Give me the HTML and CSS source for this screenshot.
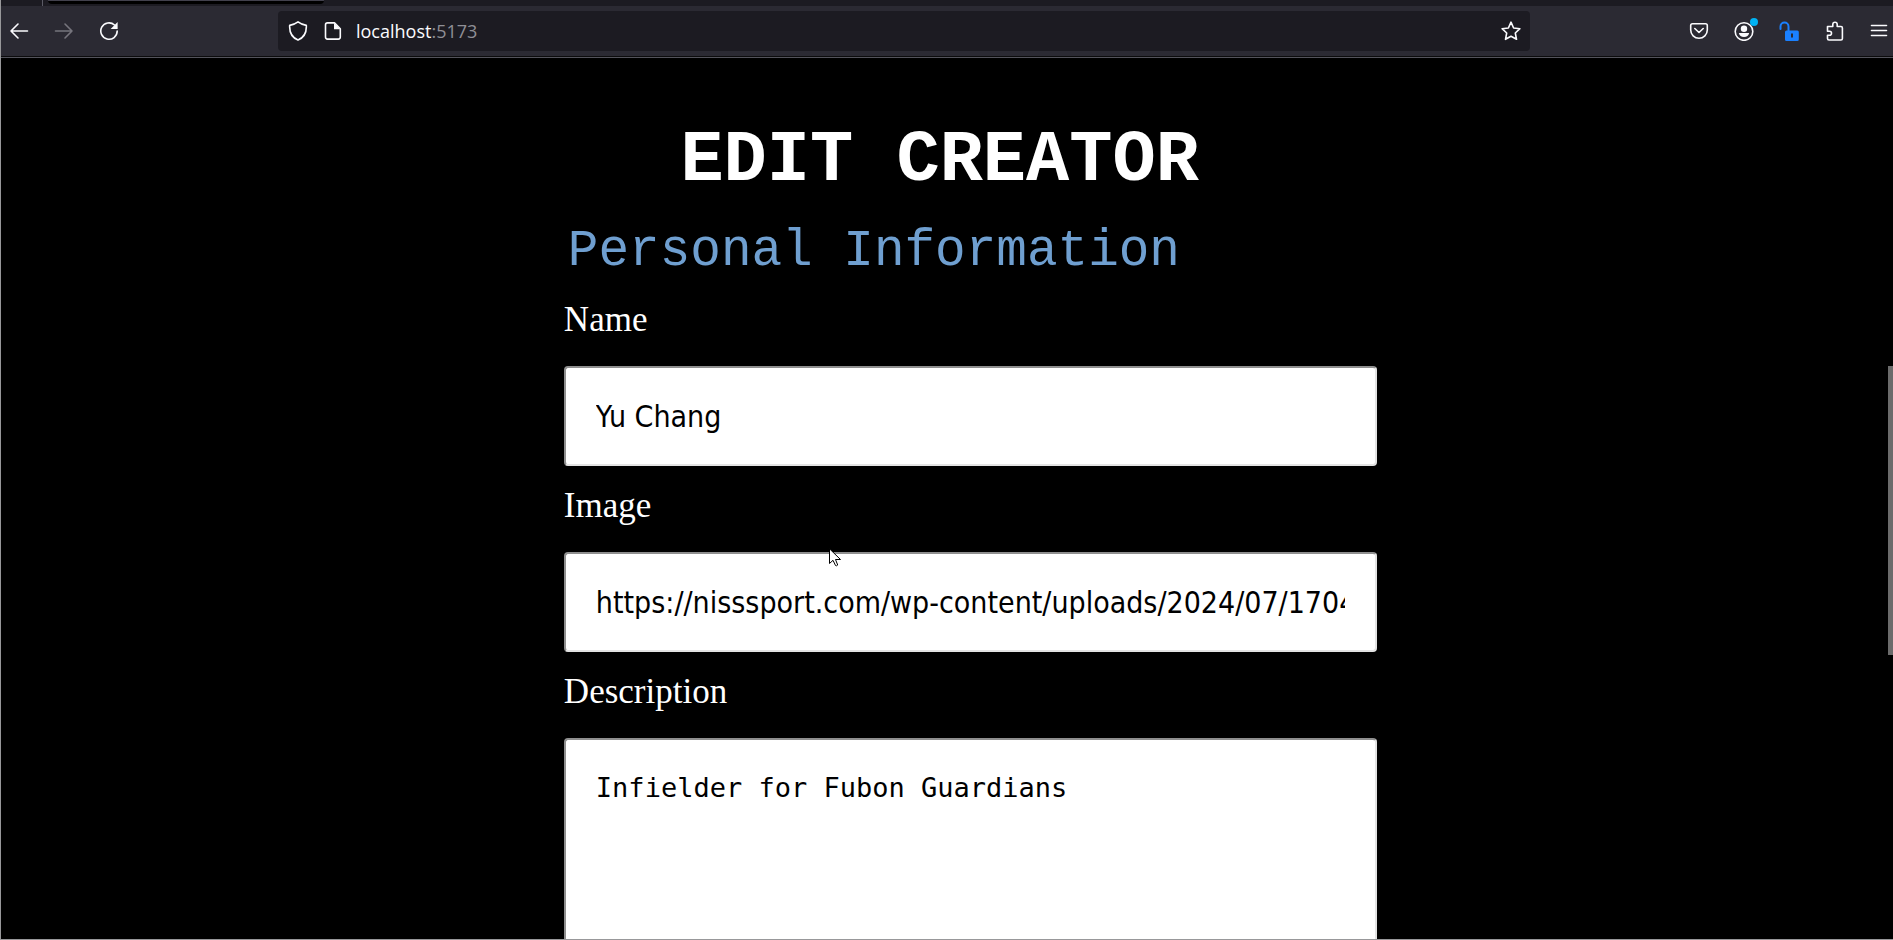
FILE: index.html
```html
<!DOCTYPE html>
<html lang="en">
<head>
<meta charset="utf-8">
<title>Edit Creator</title>
<link rel="stylesheet" href="styles.css">
</head>
<body>
<div class="window">
  <div class="tab-strip"><div class="tab-divider"></div><div class="active-tab"></div></div>
  <header class="toolbar">
    <nav class="nav-buttons">
      <button class="icon-button" aria-label="Back"><svg viewBox="0 0 20 20"><path d="M18.500 10H2M9 3L2 10L9 17"/></svg></button>
      <button class="icon-button dim" aria-label="Forward"><svg viewBox="0 0 20 20"><path d="M1.500 10H18M11 3L18 10L11 17"/></svg></button>
      <button class="icon-button" aria-label="Reload"><svg viewBox="0 0 20 20"><path d="M15.500 4A8.200 8.200 0 1 0 18.200 10"/><path class="solid" d="M18.600 1V8H11.600Z"/></svg></button>
    </nav>
    <div class="url-bar">
      <button class="icon-button" aria-label="Tracking protection"><svg viewBox="0 0 20 20"><path d="M10 .9C12.500 2.800 15.500 3.900 18.300 4.400C18.700 10.800 16 16.500 10 19.100C4 16.500 1.300 10.800 1.700 4.400C4.500 3.900 7.500 2.800 10 .9Z"/></svg></button>
      <button class="icon-button" aria-label="Site information"><svg viewBox="-1 0 20 20"><path d="M4.500 1.900H11.500L17.300 7.700V16.100Q17.300 18.100 15.300 18.100H4.500Q2.500 18.100 2.500 16.100V3.900Q2.500 1.900 4.500 1.900Z"/><path class="solid" d="M11 2V8.200H17.300Z"/></svg></button>
      <div class="address"><span>localhost</span><span class="port">:5173</span></div>
      <button class="icon-button" aria-label="Bookmark"><svg viewBox="0 0 20 20"><path d="M10 1.200L12.600 7L18.900 7.700L14.300 12L15.500 18.300L10 15.200L4.500 18.300L5.700 12L1.100 7.700L7.400 7Z"/></svg></button>
    </div>
    <nav class="tool-buttons">
      <button class="icon-button" aria-label="Pocket"><svg viewBox="0 0 20 20"><path d="M3.500 2.700H16.500Q18.300 2.700 18.300 4.500V9A8.300 8.300 0 0 1 1.700 9V4.500Q1.700 2.700 3.500 2.700ZM5.800 7.500L10 11.500L14.200 7.500"/></svg></button>
      <button class="icon-button" aria-label="Account"><svg viewBox="0 0 20 20"><circle cx="10" cy="10.500" r="8.800"/><circle class="solid" cx="10" cy="7.700" r="3.200"/><path class="solid" d="M4.800 12H15.200Q14.300 16 10 16Q5.700 16 4.800 12Z"/></svg><span class="notice"></span></button>
      <button class="icon-button blue" aria-label="Unlocked"><svg viewBox="0 0 20 20"><path d="M1.500 8V5.500A4 4 0 0 1 9.500 5.500V10"/><path class="solid" fill-rule="evenodd" d="M7.500 9.500H18.300Q19.800 9.500 19.800 11V18.500Q19.800 20 18.300 20H7.500Q6 20 6 18.500V11Q6 9.500 7.500 9.500ZM12 12.500V16.500H14V12.500Z"/></svg></button>
      <button class="icon-button" aria-label="Extensions"><svg viewBox="-1 0 20 20"><path d="M2.500 5.500H7.800V3.500A2.200 2.200 0 0 1 12.200 3.500V5.500H16Q17.400 5.500 17.400 7V17.500Q17.400 19 16 19H4Q2.500 19 2.500 17.500V14.200H4.500A2 2 0 0 0 4.500 10.200H2.500V5.500Z"/></svg></button>
      <button class="icon-button" aria-label="Menu"><svg viewBox="0 0 20 20"><path d="M2.500 4.500H17.500M2.500 9.500H17.500M2.500 14.500H17.500"/></svg></button>
    </nav>
  </header>
  <main class="page">
    <form class="creator-form">
      <h1 class="title">EDIT CREATOR</h1>
      <h2 class="subtitle">Personal Information</h2>
      <label class="label" for="name">Name</label>
      <input class="field" id="name" type="text" value="Yu Chang">
      <label class="label" for="image">Image</label>
      <input class="field" id="image" type="text" value="https://nisssport.com/wp-content/uploads/2024/07/1704">
      <label class="label" for="description">Description</label>
      <textarea class="field area" id="description">Infielder for Fubon Guardians</textarea>
    </form>
    <div class="scroll-thumb"></div>
    <svg class="pointer" viewBox="0 0 13 19"><path d="M.5.8V15.500L4 12.300L6.500 17.500Q7.500 18.300 8.700 17L6.500 11.500H11.500Z"/></svg>
  </main>
</div>
</body>
</html>
```
FILE: styles.css
```css
* { box-sizing: border-box; }
body { margin: 0; background: #000; }
.window {
  display: flex;
  flex-direction: column;
  height: 100vh;
  overflow: hidden;
  border-left: 1px solid #98989a;
  border-bottom: 1px solid #98989a;
}
.tab-strip { display: flex; flex: none; height: 6px; background: #1c1b22; }
.tab-divider { width: 42px; border-right: 1px solid #5b5b66; }
.active-tab {
  width: 276px;
  height: 4px;
  margin-left: 5px;
  background: #000;
  border-top: 1px solid #42414d;
  border-radius: 0 0 4px 4px;
}
.toolbar {
  display: flex;
  flex: none;
  align-items: center;
  height: 51px;
  background: #2b2a33;
  border-bottom: 1px solid #0c0c0d;
}
.nav-buttons, .tool-buttons { display: flex; gap: 25px; }
.nav-buttons { width: 277px; padding-left: 8px; }
.tool-buttons { width: 363px; padding-right: 4px; justify-content: flex-end; }
.url-bar {
  display: flex;
  flex: 1;
  align-items: center;
  gap: 14px;
  height: 40px;
  padding: 0 9px 0 10px;
  background: #1c1b22;
  border-radius: 4px;
}
.icon-button {
  position: relative;
  flex: none;
  width: 20px;
  height: 20px;
  padding: 0;
  border: 0;
  background: none;
  color: #fbfbfe;
}
.icon-button svg {
  display: block;
  width: 20px;
  height: 20px;
  fill: none;
  stroke: currentColor;
  stroke-width: 1.6;
  stroke-linejoin: round;
  stroke-linecap: round;
}
.icon-button .solid { fill: currentColor; stroke: none; }
.dim { color: #76757d; }
.blue { color: #1a80ff; }
.blue svg { stroke-width: 2; }
.notice {
  position: absolute;
  top: -3px;
  right: -4px;
  width: 8px;
  height: 8px;
  border-radius: 50%;
  background: #00b3f4;
}
.address { flex: 1; color: #fbfbfe; font: 18px/24px "Open Sans", "Noto Sans", sans-serif; }
.port { color: #8f8f96; }
.page {
  position: relative;
  flex: 1;
  min-height: 0;
  overflow: hidden;
  border-top: 1px solid #53535b;
}
.creator-form {
  display: flex;
  flex-direction: column;
  width: 43%;
  margin-left: 29.75%;
  padding-top: 63px;
}
.title {
  margin: 0;
  padding-right: 62px;
  color: #fff;
  font: bold 72px/80px "Liberation Mono", monospace;
  text-align: center;
  white-space: nowrap;
}
.subtitle {
  margin: 23px 0 0;
  padding-left: 4px;
  color: #6f9fd0;
  font: 51px/56px "Liberation Mono", monospace;
  white-space: nowrap;
}
.label {
  margin: 20px 0 26px;
  color: #fff;
  font: 35px/40px "Liberation Serif", serif;
}
.field {
  height: 100px;
  padding: 30px;
  border: 2px solid;
  border-color: #8f8f8f #e3e3e3 #e3e3e3 #8f8f8f;
  border-radius: 4px;
  background: #fff;
  color: #000;
  font: 30px/36px "DejaVu Sans Condensed", "Noto Sans", sans-serif;
}
.area {
  height: 320px;
  resize: none;
  font: 27px/36px "DejaVu Sans Mono", monospace;
}
.scroll-thumb {
  position: absolute;
  top: 308px;
  right: 0;
  width: 5px;
  height: 289px;
  background: #6b6b6b;
}
.pointer {
  position: absolute;
  top: 490px;
  left: 828px;
  width: 13px;
  height: 19px;
  fill: #fff;
  stroke: #000;
}
```
